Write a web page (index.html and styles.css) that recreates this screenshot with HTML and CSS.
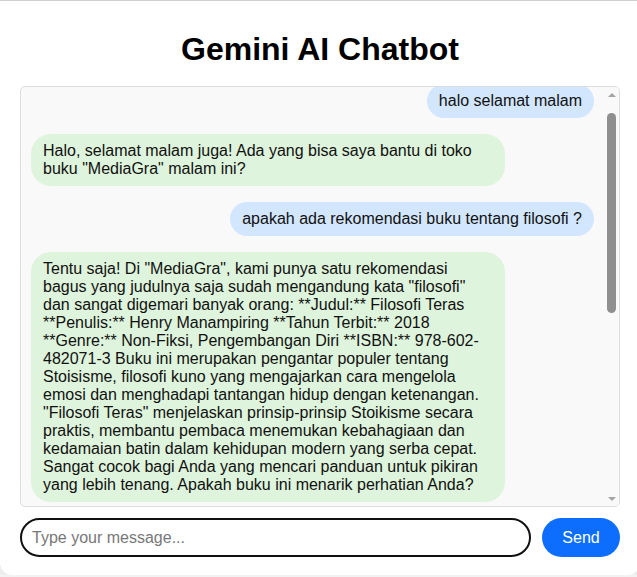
FILE: index.html
```html
<!DOCTYPE html>
<html lang="id">
<head>
<meta charset="utf-8">
<title>Gemini AI Chatbot</title>
<link rel="stylesheet" href="styles.css">
</head>
<body>
<div class="container">
  <h1 class="title">Gemini AI Chatbot</h1>
  <div class="chat-box">
    <div class="messages">
      <div class="message user">halo selamat malam</div>
      <div class="message bot">Halo, selamat malam juga! Ada yang bisa saya bantu di toko buku "MediaGra" malam ini?</div>
      <div class="message user">apakah ada rekomendasi buku tentang filosofi ?</div>
      <div class="message bot">Tentu saja! Di "MediaGra", kami punya satu rekomendasi bagus yang judulnya saja sudah mengandung kata "filosofi" dan sangat digemari banyak orang: **Judul:** Filosofi Teras **Penulis:** Henry Manampiring **Tahun Terbit:** 2018 **Genre:** Non-Fiksi, Pengembangan Diri **ISBN:** 978-602-482071-3 Buku ini merupakan pengantar populer tentang Stoisisme, filosofi kuno yang mengajarkan cara mengelola emosi dan menghadapi tantangan hidup dengan ketenangan. "Filosofi Teras" menjelaskan prinsip-prinsip Stoikisme secara praktis, membantu pembaca menemukan kebahagiaan dan kedamaian batin dalam kehidupan modern yang serba cepat. Sangat cocok bagi Anda yang mencari panduan untuk pikiran yang lebih tenang. Apakah buku ini menarik perhatian Anda?</div>
    </div>
    <div class="scrollbar" aria-hidden="true">
      <div class="sb-btn"><span class="arrow-up"></span></div>
      <div class="sb-track"><div class="sb-thumb"></div></div>
      <div class="sb-btn"><span class="arrow-down"></span></div>
    </div>
  </div>
  <div class="input-row">
    <input class="msg-input" type="text" placeholder="Type your message..." autofocus>
    <button class="send-btn" type="button">Send</button>
  </div>
</div>
</body>
</html>
```
FILE: styles.css
```css
html, body {
  margin: 0;
  padding: 0;
}
html {
  overflow: hidden;
}
body {
  background: #f2f2f2;
  border-top: 1px solid #cfcfcf;
  font-family: "Liberation Sans", Arial, sans-serif;
  color: #111;
}
.container {
  width: 600px;
  background: #ffffff;
  border-radius: 0 0 12px 12px;
  box-shadow: 0 0 8px rgba(0, 0, 0, 0.08);
  padding: 20px 20px 18px;
}
.title {
  font-size: 32px;
  font-weight: bold;
  text-align: center;
  margin: 10px 0 18px;
  color: #000;
}
.chat-box {
  box-sizing: border-box;
  height: 421px;
  border: 1px solid #dddddd;
  border-radius: 5px;
  background: #f9f9f9;
  overflow: hidden;
  display: flex;
  align-items: flex-start;
}
.messages {
  flex: 1;
  min-width: 0;
  padding: 10px;
  margin-top: -21px;
  display: flex;
  flex-direction: column;
}
.message {
  font-size: 16px;
  margin: 8px 0;
  padding: 8px 12px;
  border-radius: 20px;
  max-width: 80%;
  color: #111;
}
.user {
  align-self: flex-end;
  background: #d2e6fd;
}
.bot {
  align-self: flex-start;
  background: #dff4dc;
}
.scrollbar {
  width: 15px;
  height: 100%;
  display: flex;
  flex-direction: column;
  background: #f9f9f9;
  flex-shrink: 0;
}
.sb-btn {
  height: 15px;
  display: flex;
  align-items: center;
  justify-content: center;
}
.arrow-up {
  width: 0;
  height: 0;
  border-left: 4px solid transparent;
  border-right: 4px solid transparent;
  border-bottom: 4px solid #a3a3a3;
}
.arrow-down {
  width: 0;
  height: 0;
  border-left: 4px solid transparent;
  border-right: 4px solid transparent;
  border-top: 4px solid #a3a3a3;
}
.sb-track {
  flex: 1;
}
.sb-thumb {
  width: 9px;
  height: 200px;
  margin: 11px 0 0 3px;
  border-radius: 5px;
  background: #8f8f8f;
}
.input-row {
  display: flex;
  gap: 11px;
  margin-top: 11px;
}
.msg-input {
  flex: 1;
  box-sizing: border-box;
  height: 39px;
  border: 2px solid #111;
  border-radius: 20px;
  padding: 0 10px;
  font-family: "Liberation Sans", Arial, sans-serif;
  font-size: 16px;
  background: #fff;
  outline: none;
  caret-color: #000;
}
.msg-input::placeholder {
  color: #777;
}
.send-btn {
  width: 78px;
  height: 39px;
  border: none;
  border-radius: 20px;
  background: #0d6efd;
  color: #fff;
  font-family: "Liberation Sans", Arial, sans-serif;
  font-size: 16px;
  cursor: pointer;
}
```
